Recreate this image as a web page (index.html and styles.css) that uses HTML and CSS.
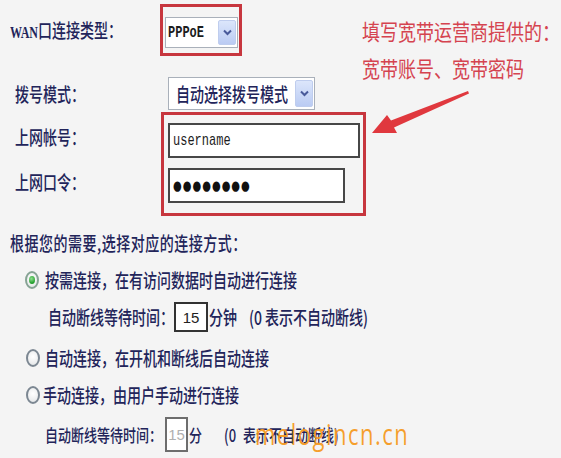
FILE: index.html
```html
<!DOCTYPE html>
<html lang="zh-CN">
<head>
  <meta charset="UTF-8" />
  <title>WAN口设置</title>
  <meta name="viewport" content="width=device-width, initial-scale=1.0" />
  <link rel="stylesheet" href="styles.css">
</head>
<body>
  <div class="screen">

    <!-- WAN type -->
    <div class="row row-wan">
      <span class="label t"><span class="latin">WAN</span>口连接类型：</span>
      <div class="hilite hilite-wan">
        <div class="select select-wan">
          <span class="mono bold t">PPPoE</span>
          <span class="select-btn">
            <svg width="9" height="7" viewBox="0 0 9 7"><path d="M1 1.5 L4.5 5 L8 1.5" fill="none" stroke="#48599a" stroke-width="2"/></svg>
          </span>
        </div>
      </div>
    </div>

    <!-- Dial mode -->
    <div class="row row-dial">
      <span class="label t">拨号模式：</span>
      <div class="select select-dial">
        <span class="t">自动选择拨号模式</span>
        <span class="select-btn">
          <svg width="9" height="7" viewBox="0 0 9 7"><path d="M1 1.5 L4.5 5 L8 1.5" fill="none" stroke="#48599a" stroke-width="2"/></svg>
        </span>
      </div>
    </div>

    <!-- Account -->
    <div class="row row-cred">
      <div class="cred-labels">
        <span class="label t">上网帐号：</span>
        <span class="label t">上网口令：</span>
      </div>
      <div class="hilite hilite-cred">
        <div class="field field-user"><span class="mono t">username</span></div>
        <div class="field field-pass"><span class="dots t">●●●●●●●●</span></div>
      </div>
    </div>

    <div class="intro"><span class="t">根据您的需要,选择对应的连接方式：</span></div>

    <div class="opt opt-1">
      <span class="radio checked"></span>
      <span class="t">按需连接，在有访问数据时自动进行连接</span>
    </div>
    <div class="sub sub-1">
      <span class="t">自动断线等待时间：</span>
      <span class="num">15</span>
      <span class="t">分钟</span>
      <span class="t note">(0 表示不自动断线)</span>
    </div>
    <div class="opt opt-2">
      <span class="radio"></span>
      <span class="t">自动连接，在开机和断线后自动连接</span>
    </div>
    <div class="opt opt-3">
      <span class="radio"></span>
      <span class="t">手动连接，由用户手动进行连接</span>
    </div>
    <div class="sub sub-2">
      <span class="t">自动断线等待时间：</span>
      <span class="num num-off">15</span>
      <span class="t unit">分</span>
      <span class="t note">(0</span>
      <span class="t note-text">表示不自动断线)</span>
    </div>

    <!-- annotation -->
    <div class="callout">
      <p><span>填写宽带运营商提供的：</span></p>
      <p><span>宽带账号、宽带密码</span></p>
    </div>
    <svg class="arrow" width="104" height="60" viewBox="0 0 104 60">
      <polygon points="4,47 19,29 23,34.5 100,5 101,7.5 26,41.5 29,47" fill="#e0383e"/>
    </svg>

    <div class="watermark">melogincn.cn</div>
  </div>
</body>
</html>
```

FILE: styles.css
```css
body {
  margin: 0;
  background: #f4f4f4;
  font-family: "Noto Sans CJK SC", sans-serif;
  font-size: 14px;
  font-weight: 500;
  color: #22245a;
}
.screen {
  position: relative;
  width: 561px;
  height: 458px;
  overflow: hidden;
  padding-top: 4px;
  box-sizing: border-box;
}
.t {
  display: inline-block;
  transform: scaleY(1.35);
}
.row {
  display: flex;
  align-items: center;
}
.latin {
  font-family: "Liberation Serif", serif;
  font-weight: bold;
  font-size: 12px;
}
.mono {
  font-family: "Liberation Mono", monospace;
  font-size: 12px;
  font-weight: normal;
  color: #1c1c1c;
}
.select-wan .mono {
  font-weight: bold;
}
.hilite {
  border: 3px solid #c7363e;
  box-sizing: border-box;
}

/* WAN row */
.row-wan {
  padding-left: 10px;
}
.row-wan .label {
  width: 150px;
}
.hilite-wan {
  padding: 10px 1px 5px 2px;
}
.select {
  display: flex;
  align-items: center;
  justify-content: space-between;
  box-sizing: border-box;
  background: #fff;
  border: 1px solid #a9b0ba;
}
.select-wan {
  width: 73px;
  height: 31px;
  padding: 0 1px 0 2px;
}
.select-btn {
  width: 18px;
  align-self: stretch;
  margin: 2px 0;
  display: flex;
  align-items: center;
  justify-content: center;
  background: linear-gradient(#dce6fb, #bacbf3);
  border: 1px solid #bfcdee;
  border-radius: 2px;
  box-sizing: border-box;
}

/* dial row */
.row-dial {
  margin-top: 21px;
  padding-left: 15px;
}
.row-dial .label {
  width: 153px;
}
.select-dial {
  width: 147px;
  height: 33px;
  padding: 0 1px 0 7px;
}

/* account */
.row-cred {
  margin-top: 2px;
  align-items: flex-start;
}
.cred-labels {
  width: 146px;
  padding: 8px 0 0 15px;
  display: flex;
  flex-direction: column;
  gap: 10px;
}
.cred-labels .label {
  height: 35px;
  line-height: 35px;
}
.hilite-cred {
  width: 205px;
  padding: 8px 0 10px 4px;
  display: flex;
  flex-direction: column;
  gap: 10px;
}
.field {
  box-sizing: border-box;
  height: 35px;
  background: #fff;
  border: 2px solid #474747;
  padding-left: 3px;
  display: flex;
  align-items: center;
}
.field-user {
  width: 192px;
}
.field-pass {
  width: 177px;
}
.dots {
  font-family: "DejaVu Sans", sans-serif;
  font-size: 10px;
  color: #111;
  letter-spacing: 1px;
}

/* connection mode */
.intro {
  margin-top: 17px;
  padding-left: 10px;
  line-height: 20px;
  letter-spacing: 0.5px;
}
.opt {
  display: flex;
  align-items: center;
  height: 24px;
}
.opt-1 {
  margin-top: 15px;
  padding-left: 25px;
}
.opt-2 {
  margin-top: 14px;
  padding-left: 26px;
}
.opt-3 {
  margin-top: 13px;
  padding-left: 26px;
}
.radio {
  flex: none;
  width: 14px;
  height: 18px;
  border-radius: 50%;
  box-sizing: border-box;
  border: 2px solid #7c8792;
  background: radial-gradient(circle at 50% 40%, #fff, #e2e4e6);
  margin-right: 6px;
  display: flex;
  align-items: center;
  justify-content: center;
}
.opt-2 .radio {
  margin-right: 5px;
}
.opt-3 .radio {
  margin-right: 3px;
}
.radio.checked {
  border-color: #86a394;
}
.radio.checked::after {
  content: "";
  width: 6px;
  height: 8px;
  border-radius: 50%;
  background: radial-gradient(circle at 40% 35%, #8fe08f, #1f9c2a 70%);
}
.sub {
  display: flex;
  align-items: center;
}
.sub-1 {
  margin-top: 10px;
  height: 30px;
  padding-left: 48px;
}
.num {
  box-sizing: border-box;
  display: flex;
  align-items: center;
  justify-content: center;
  background: #fff;
  border: 2px solid #333;
  font-family: "Liberation Sans", sans-serif;
  font-size: 15px;
  font-weight: normal;
  color: #222;
}
.sub-1 .num {
  width: 34px;
  height: 30px;
  margin-right: 1px;
}
.sub-1 .note {
  margin-left: 12px;
}
.sub-2 {
  margin-top: 10px;
  height: 35px;
  padding-left: 45px;
  font-size: 13px;
}
.num-off {
  width: 23px;
  height: 35px;
  margin-left: 3px;
  border-color: #6d6d6d;
  color: #b0b0b0;
}
.unit {
  margin-left: 1px;
}
.sub-2 .note {
  margin-left: 22px;
}
.sub-2 .note-text {
  margin-left: 7px;
}

/* overlays */
.callout {
  position: absolute;
  left: 362px;
  top: 12px;
  color: #d5434f;
  font-size: 18px;
  font-weight: normal;
  line-height: 37px;
}
.callout p {
  margin: 0;
}
.callout span {
  display: inline-block;
  transform: scaleY(1.22);
}
.arrow {
  position: absolute;
  left: 368px;
  top: 86px;
}
.watermark {
  position: absolute;
  left: 255px;
  top: 421px;
  font-family: "Open Sans", sans-serif;
  font-weight: normal;
  font-size: 22px;
  line-height: 24px;
  letter-spacing: 1.5px;
  color: rgba(246, 154, 30, 0.95);
  transform: scaleY(1.35);
  transform-origin: left center;
}
```
